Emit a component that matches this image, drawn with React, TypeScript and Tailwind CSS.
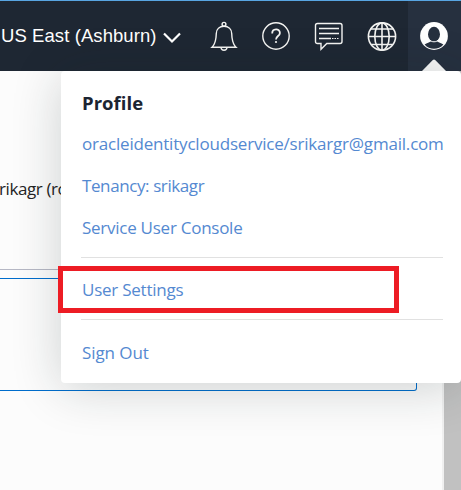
import React from "react";

const stroke = { fill: "none", stroke: "#f4f4f2", strokeWidth: 1.4 } as const;

function Bell() {
  return (
    <svg width="28" height="32" viewBox="0 0 28 32" {...stroke}>
      <circle cx="14" cy="4.3" r="1.9" />
      <path d="M2 27.300C4.500 25 5.500 21 6 17.500L6.300 13.500C6.400 9 9.500 6.300 14 6.300S21.600 9 21.700 13.500L22 17.500C22.500 21 23.500 25 26 27.300Z" />
      <path d="M11 27.500C11.300 31.200 16.700 31.200 17 27.500" />
    </svg>
  );
}

function Help() {
  return (
    <svg width="30" height="32" viewBox="0 0 30 32" {...stroke}>
      <circle cx="15" cy="16" r="13.200" />
      <path d="M11.200 13.500C11.200 8.200 18.900 8.200 18.900 12.900C18.900 16 15 16 15 19.400" strokeWidth="1.8" />
      <circle cx="15" cy="22" r="1.1" fill="#f4f4f2" stroke="none" />
    </svg>
  );
}

function Chat() {
  return (
    <svg width="30" height="32" viewBox="0 0 30 32" {...stroke}>
      <path d="M3.500 3.500H26Q28 3.500 28 5.500V21.500Q28 23.500 26 23.500H12.800L7 29.300V23.500H3.500Q1.500 23.500 1.500 21.500V5.500Q1.500 3.500 3.500 3.500Z" />
      <path d="M5 8.500H25M5 13.500H25M5 18.500H17" />
      <path d="M18 18.500H25" strokeDasharray="1.5 1" strokeWidth="1" />
    </svg>
  );
}

function Globe() {
  return (
    <svg width="30" height="32" viewBox="0 0 30 32" {...stroke} strokeWidth="1.6">
      <circle cx="15" cy="16.500" r="13.600" />
      <ellipse cx="15" cy="16.500" rx="7.200" ry="13.600" />
      <path d="M15 2.700V30.300M3.800 9H26.200M1.200 16.500H28.800M3.800 24.500H26.200" />
    </svg>
  );
}

function Avatar() {
  return (
    <svg width="30" height="32" viewBox="0 0 30 32">
      <circle cx="15" cy="16" r="13.900" fill="#fff" />
      <ellipse cx="15" cy="14.200" rx="6" ry="7.500" fill="#26303f" />
      <path d="M5.600 24.500C8 22.600 10.500 22.500 12.200 21.200L15 22L17.800 21.200C19.500 22.500 22 22.600 24.400 24.500C19.500 30.300 10.500 30.300 5.600 24.500Z" fill="#26303f" />
      <path d="M10.500 19.500C12 22.600 18 22.600 19.500 19.500" fill="none" stroke="#fff" strokeWidth="0.900" />
    </svg>
  );
}

function Header() {
  return (
    <header className="relative flex h-[71px] border-t border-[#58a5e2] bg-[#1e2733]">
      <div className="flex h-[70px] w-[210px] items-center gap-1.5 pl-px">
        <span className="whitespace-nowrap font-['Liberation_Sans',Arial,sans-serif] text-[18.500px] tracking-[0.080px] text-white">
          US East (Ashburn)
        </span>
        <svg className="mt-1" width="18" height="12" viewBox="0 0 18 12" fill="none" stroke="#fff" strokeWidth="2.200">
          <path d="M1 1.500L9 9.500L17 1.500" />
        </svg>
      </div>
      <div className="flex flex-1 items-center gap-[23px] pb-px pt-px"><Bell /><Help /><Chat /><Globe /></div>
      <div className="relative flex w-[53px] items-center bg-[#26303f] pb-px pl-[11px]">
        <Avatar />
        <svg className="absolute bottom-0 left-[14px]" width="24" height="12" viewBox="0 0 24 12">
          <path d="M0 12L10.800 1Q12 0 13.200 1L24 12Z" fill="#f8f8f8" />
        </svg>
      </div>
    </header>
  );
}

function ProfileMenu() {
  return (
    <nav className="absolute left-[61px] top-0 flex h-[312px] w-[400px] flex-col rounded bg-white pl-[20px] pr-[18px] text-[17px] text-[#5489d1] shadow-[0_5px_50px_rgba(20,35,35,0.2)]">
      <h2 className="mt-[14px] flex h-[36px] items-center pl-px text-[18.500px] font-bold text-[#1b2432]"><span className="tracking-[0.050px]">Profile</span></h2>
      <a className="mt-[2px] flex h-[42px] items-center whitespace-nowrap pl-px tracking-[-0.200px]">oracleidentitycloudservice/srikargr@gmail.com</a>
      <a className="flex h-[42px] items-center pl-px tracking-[-0.400px]">Tenancy: srikagr</a>
      <a className="flex h-[42px] items-center pl-px tracking-[-0.260px]">Service User Console</a>
      <hr className="mt-[8px] border-t border-[#e1e1e1]" />
      <a className="mt-[9px] flex h-[46px] items-center pl-px tracking-[-0.240px]">User Settings</a>
      <hr className="mt-[6px] border-t border-[#e1e1e1]" />
      <a className="mt-[12px] flex h-[42px] items-center pl-px tracking-[-0.080px]">Sign Out</a>
      <div className="absolute -left-[3px] top-[195px] h-[47px] w-[341px] border-[5px] border-[#ed1c24]" />
    </nav>
  );
}

export default function App() {
  return (
    <div className="h-[490px] w-[461px] overflow-hidden bg-[#fcfcfc] font-['Open_Sans','Noto_Sans',sans-serif]">
      <Header />
      <main className="relative flex h-[419px]">
        <section className="flex w-[442px] flex-col">
          <div className="h-[199px] border-b border-[#b6b8c5] pt-[106px]">
            <p className="-ml-px whitespace-nowrap text-[17px] leading-6 tracking-[-0.400px] text-[#242424]">rikagr (root)</p>
          </div>
          <div className="mt-[8px] h-[113px] w-[417px] rounded-br-[3px] border-y border-r border-[#006dcc]" />
        </section>
        <div className="flex-1 border-l-2 border-[#f0f0f0] bg-[#c1c1c1]" />
        <ProfileMenu />
      </main>
    </div>
  );
}
